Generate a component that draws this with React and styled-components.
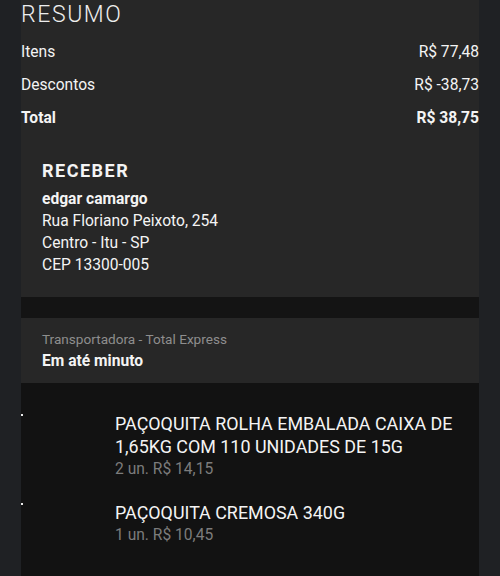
import React from "react";
import styled, { createGlobalStyle } from "styled-components";

const Global = createGlobalStyle`
  html, body { margin: 0; padding: 0; background: #1f2124; }
  body { font-family: Roboto, "Noto Sans", "Liberation Sans", sans-serif; color: #f2f2f2; }
  * { box-sizing: border-box; }
`;

const Page = styled.div`
  min-height: 576px;
  background: #1f2124;
  padding: 0 21px;
`;

const Column = styled.div`
  width: 458px;
  display: flex;
  flex-direction: column;
  min-height: 576px;
`;

const Panel = styled.section`
  background: #272727;
  display: flex;
  flex-direction: column;
`;

const Title = styled.h1`
  margin: 0;
  font-weight: 300;
  font-size: 23px;
  line-height: 30px;
  letter-spacing: 1.6px;
  color: #eeeeee;
`;

const Rows = styled.div`
  margin-top: 5px;
  display: flex;
  flex-direction: column;
`;

const Row = styled.div`
  display: flex;
  justify-content: space-between;
  align-items: center;
  height: 33px;
  font-size: 15.6px;
  font-weight: ${(p) => (p.$bold ? 700 : 400)};
  color: #f4f4f4;
`;

const Address = styled.div`
  padding: 24px 21px 21px;
  display: flex;
  flex-direction: column;
`;

const SectionLabel = styled.h2`
  margin: 0 0 4px;
  font-size: 18px;
  font-weight: 700;
  letter-spacing: 1.5px;
  line-height: 26px;
  color: #f4f4f4;
`;

const Line = styled.div`
  line-height: 22px;
  font-weight: ${(p) => (p.$bold ? 700 : 400)};
  color: ${(p) => (p.$muted ? "#8e8e8e" : "#f4f4f4")};
  font-size: ${(p) => (p.$small ? "13.6px" : "15.6px")};
`;

const Band = styled.div`
  height: 21px;
  background: #141414;
`;

const Shipping = styled.div`
  background: #272727;
  padding: 10px 21px 11px;
  display: flex;
  flex-direction: column;
`;

const Items = styled.div`
  flex: 1;
  background: #121212;
  padding: 29px 0 20px;
  display: flex;
  flex-direction: column;
  gap: 21px;
`;

const Item = styled.div`
  display: grid;
  grid-template-columns: 94px 1fr;
`;

const Thumb = styled.div`
  position: relative;
`;

const Dot = styled.span`
  position: absolute;
  left: 0;
  top: 2px;
  width: 2px;
  height: 2px;
  background: #e8e8e8;
`;

const ItemInfo = styled.div`
  display: flex;
  flex-direction: column;
  padding-right: 16px;
`;

const ItemName = styled.div`
  font-size: 17.9px;
  line-height: 23px;
  color: #f4f4f4;
`;

const ItemMeta = styled.div`
  font-size: 15.6px;
  line-height: 22px;
  color: #7c7c7c;
`;

const items = [
  { name: "PAÇOQUITA ROLHA EMBALADA CAIXA DE 1,65KG COM 110 UNIDADES DE 15G", meta: "2 un. R$ 14,15" },
  { name: "PAÇOQUITA CREMOSA 340G", meta: "1 un. R$ 10,45" },
];

export default function App() {
  return (
    <>
      <Global />
      <Page>
        <Column>
          <Panel>
            <Title>RESUMO</Title>
            <Rows>
              <Row><span>Itens</span><span>R$ 77,48</span></Row>
              <Row><span>Descontos</span><span>R$ -38,73</span></Row>
              <Row $bold><span>Total</span><span>R$ 38,75</span></Row>
            </Rows>
            <Address>
              <SectionLabel>RECEBER</SectionLabel>
              <Line $bold>edgar camargo</Line>
              <Line>Rua Floriano Peixoto, 254</Line>
              <Line>Centro - Itu - SP</Line>
              <Line>CEP 13300-005</Line>
            </Address>
          </Panel>
          <Band />
          <Shipping>
            <Line $muted $small>Transportadora - Total Express</Line>
            <Line $bold>Em até minuto</Line>
          </Shipping>
          <Items>
            {items.map((it) => (
              <Item key={it.name}>
                <Thumb><Dot /></Thumb>
                <ItemInfo>
                  <ItemName>{it.name}</ItemName>
                  <ItemMeta>{it.meta}</ItemMeta>
                </ItemInfo>
              </Item>
            ))}
          </Items>
        </Column>
      </Page>
    </>
  );
}
